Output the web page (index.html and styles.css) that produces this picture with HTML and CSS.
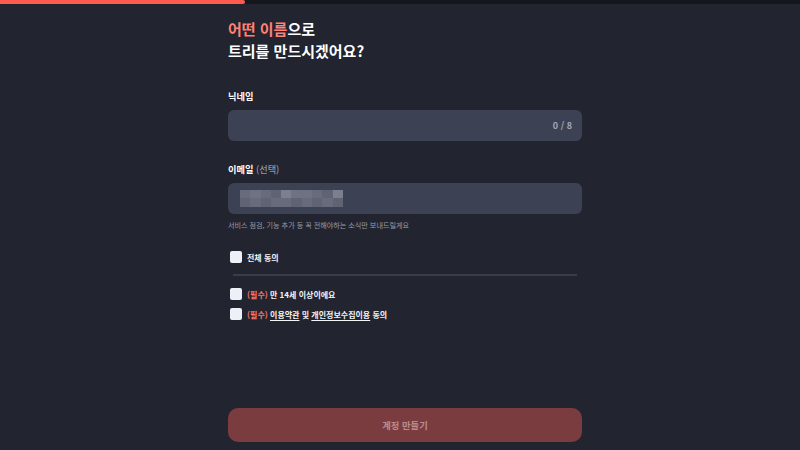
FILE: index.html
```html
<!DOCTYPE html>
<html lang="ko">
<head>
<meta charset="utf-8">
<link rel="stylesheet" href="styles.css">
</head>
<body>
<div class="track"><div class="fill"></div></div>
<div class="wrap">
  <main class="col">
    <h1 class="title"><span class="hl">어떤 이름</span>으로<br>트리를 만드시겠어요?</h1>

    <label class="label first">닉네임</label>
    <div class="input"><span class="count">0 / 8</span></div>

    <label class="label second">이메일 <span class="opt">(선택)</span></label>
    <div class="input">
      <div class="blur">
        <i class="c2"></i><i class="c3"></i><i class="c2"></i><i class="c1"></i><i class="c4"></i><i class="c3"></i><i class="c3"></i><i class="c2"></i><i class="c1"></i><i class="c4"></i>
        <i class="c1"></i><i class="c2"></i><i class="c1"></i><i class="c2"></i><i class="c2"></i><i class="c1"></i><i class="c2"></i><i class="c1"></i><i class="c2"></i><i class="c1"></i>
      </div>
    </div>
    <p class="help">서비스 점검, 기능 추가 등 꼭 전해야하는 소식만 보내드릴게요</p>

    <div class="check all"><span class="box"></span><span>전체 동의</span></div>
    <div class="divider"></div>
    <div class="checks">
      <div class="check"><span class="box"></span><span><span class="req">(필수)</span> 만 14세 이상이에요</span></div>
      <div class="check"><span class="box"></span><span><span class="req">(필수)</span> <u>이용약관</u> 및 <u>개인정보수집이용</u> 동의</span></div>
    </div>

    <button class="btn">계정 만들기</button>
  </main>
</div>
</body>
</html>
```
FILE: styles.css
```css
* { box-sizing: border-box; }
html, body { margin: 0; height: 100%; }
body {
  background: #22242f;
  font-family: "Noto Sans CJK KR", "Noto Sans", sans-serif;
  color: #f2f3f7;
  display: flex;
  flex-direction: column;
}
.track { height: 4px; background: #15171e; flex: none; }
.fill { width: 245px; height: 4px; background: #ff5a50; border-radius: 0 3px 3px 0; }
.wrap { flex: 1; display: flex; justify-content: center; padding-left: 10px; }
.col { width: 354px; display: flex; flex-direction: column; }
.title {
  margin: 14px 0 0;
  font-size: 15px;
  line-height: 22px;
  font-weight: 700;
  color: #ffffff;
}
.hl { color: #ff8276; }
.label {
  display: block;
  font-size: 9.2px;
  line-height: 14px;
  font-weight: 700;
  color: #ffffff;
}
.label.first { margin-top: 27px; }
.label.second { margin-top: 21px; }
.opt { color: #9094a4; font-weight: 500; }
.input {
  margin-top: 7px;
  height: 31px;
  background: #3d4154;
  border-radius: 6px;
  display: flex;
  align-items: center;
  padding: 0 10px 0 12px;
}
.count {
  margin-left: auto;
  font-size: 9px;
  color: #a4a8b6;
  font-weight: 700;
}
.blur {
  display: grid;
  grid-template-columns: repeat(10, 10.3px);
  grid-template-rows: 8px 9px;
  filter: blur(0.6px);
}
.blur i { display: block; }
.c1 { background: #5f6374; }
.c2 { background: #676b7c; }
.c3 { background: #6e7283; }
.c4 { background: #7c7f8e; }
.help {
  margin: 6px 0 0;
  font-size: 7.1px;
  line-height: 10px;
  color: #9a9eac;
}
.check {
  display: flex;
  align-items: center;
  gap: 5px;
  padding-left: 2px;
  height: 14px;
  font-size: 8px;
  font-weight: 700;
  color: #f3f4f8;
}
.check.all { margin-top: 20px; }
.box {
  width: 12px;
  height: 12px;
  background: #eef0f7;
  border-radius: 2px;
  flex: none;
}
.divider {
  margin: 10px 5px 0;
  height: 2px;
  background: #393c4a;
}
.checks {
  margin-top: 11px;
  display: flex;
  flex-direction: column;
  gap: 6px;
}
.req { color: #ff7468; }
u { text-underline-offset: 1.5px; }
.btn {
  margin-top: auto;
  margin-bottom: 8px;
  height: 34px;
  border: none;
  border-radius: 10px;
  background: #7b3c40;
  color: #b88d90;
  font-family: inherit;
  font-size: 9.3px;
  font-weight: 700;
}
```
